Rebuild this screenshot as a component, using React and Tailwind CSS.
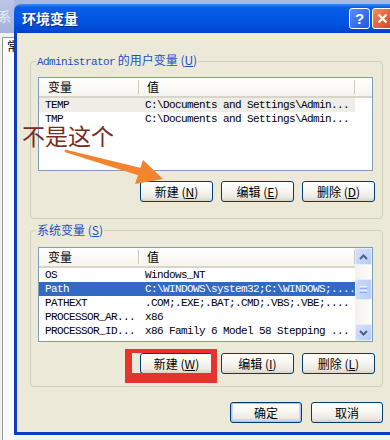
const CJK = "font-['Noto_Sans_CJK_SC','Noto_Sans',sans-serif]";
const MONO = "font-['Liberation_Mono','Noto_Sans_CJK_SC',monospace]";

const userRows = [
  { name: 'TEMP', value: 'C:\\Documents and Settings\\Admin...', soft: true },
  { name: 'TMP', value: 'C:\\Documents and Settings\\Admin...' },
];

const sysRows = [
  { name: 'OS', value: 'Windows_NT' },
  { name: 'Path', value: 'C:\\WINDOWS\\system32;C:\\WINDOWS;....', active: true },
  { name: 'PATHEXT', value: '.COM;.EXE;.BAT;.CMD;.VBS;.VBE;....' },
  { name: 'PROCESSOR_AR...', value: 'x86' },
  { name: 'PROCESSOR_ID...', value: 'x86 Family 6 Model 58 Stepping ...' },
  { name: 'PROCESSOR_LEVEL', value: '6' },
];

const XPButton = ({ text, hotkey, isDefault = false, width = 'w-[73px]' }) => (
  <button
    type="button"
    className={`h-[21px] ${width} rounded-[3px] border border-[#003C74] bg-[linear-gradient(to_bottom,#FFFFFF_0%,#F7F6F1_45%,#ECEAE1_80%,#D8D3C7_100%)] text-[12px] leading-none text-black ${CJK} ${
      isDefault ? 'shadow-[inset_0_0_0_1px_#A9C4F5,inset_0_-1px_0_2px_#C9DAF8]' : ''
    }`}
  >
    {text}
    {hotkey && (
      <span>
        {' ('}
        <span className="underline">{hotkey}</span>
        {')'}
      </span>
    )}
  </button>
);

const Chevron = ({ down = false }) => (
  <svg width="9" height="6" viewBox="0 0 9 6" className={down ? 'rotate-180' : ''}>
    <path d="M1 5 L4.5 1.5 L8 5" fill="none" stroke="#4D6185" strokeWidth="2" />
  </svg>
);

const ScrollBar = () => (
  <div className="flex w-[17px] shrink-0 flex-col bg-[linear-gradient(to_right,#F3F1EC,#FEFEFB)]">
    <div className="flex h-[17px] items-center justify-center rounded-[2px] border border-[#E6EDFD] bg-[linear-gradient(to_bottom_right,#D6E2FC,#B6CBF7)]">
      <Chevron />
    </div>
    <div className="h-[14px]" />
    <div className="flex h-[21px] flex-col items-center justify-center gap-[1px] rounded-[2px] border border-[#E6EDFD] bg-[linear-gradient(to_right,#CADAFC,#B9CEF8)]">
      <div className="h-px w-[7px] bg-[#EEF4FE]" />
      <div className="h-px w-[7px] bg-[#8CB0F8]" />
      <div className="h-px w-[7px] bg-[#EEF4FE]" />
      <div className="h-px w-[7px] bg-[#8CB0F8]" />
    </div>
    <div className="flex-1" />
    <div className="flex h-[17px] items-center justify-center rounded-[2px] border border-[#E6EDFD] bg-[linear-gradient(to_bottom_right,#D6E2FC,#B6CBF7)]">
      <Chevron down />
    </div>
  </div>
);

const ListView = ({ rows, heightClass, scroll = false }) => (
  <div className={`flex ${heightClass} w-[335px] overflow-hidden border border-[#7F9DB9] bg-white`}>
    <div className="min-w-0 flex-1">
      {/* Header */}
      <div className={`flex h-[20px] items-center border-b-[2px] border-[#D8D5C8] bg-[linear-gradient(to_bottom,#FFFFFF,#F5F4EE)] text-[12px] text-black ${CJK}`}>
        <div className="w-[99px] shrink-0 pl-[9px]">变量</div>
        <div className="h-[14px] w-[2px] shrink-0 border-l border-r border-l-[#CBC8BA] border-r-white" />
        <div className="w-[214px] shrink-0 pl-[7px]">值</div>
        <div className="h-[14px] w-[2px] shrink-0 border-l border-r border-l-[#CBC8BA] border-r-white" />
      </div>
      {/* Rows */}
      {rows.map((r) => (
        <div
          key={r.name}
          className={`flex h-[14px] w-[316px] items-center whitespace-nowrap text-[11px] leading-[14px] tracking-[-0.6px] ${MONO} ${
            r.active ? 'bg-[#316AC5] text-white' : r.soft ? 'bg-[#EEEDE6] text-black' : 'text-black'
          }`}
        >
          <div className="w-[100px] shrink-0 overflow-hidden pl-[6px]">{r.name}</div>
          <div className="min-w-0 flex-1 overflow-hidden pl-[6px]">{r.value}</div>
        </div>
      ))}
    </div>
    {scroll && <ScrollBar />}
  </div>
);

const GroupBox = ({ legend, className = '', children }) => (
  <fieldset className={`w-[353px] rounded-[4px] border border-[#D0D0BF] px-[7px] ${className}`}>
    <legend className={`-ml-[2px] px-[1px] text-[12px] leading-[16px] text-[#1D4EC6] ${CJK}`}>{legend}</legend>
    {children}
  </fieldset>
);

const TitleBar = () => (
  <div className="flex h-[29px] items-center justify-between rounded-tl-[7px] bg-[linear-gradient(to_bottom,#3E8DF6_0%,#0B5DE8_12%,#0256E4_55%,#0049D3_90%,#0040C0_100%)] pl-[8px]">
    <span className={`text-[14px] font-bold text-white [text-shadow:1px_1px_#0A2A8F] ${CJK}`}>环境变量</span>
    <div className="mr-[5px] flex gap-[2px]">
      <div className="flex h-[21px] w-[21px] items-center justify-center rounded-[3px] border border-white bg-[linear-gradient(to_bottom_right,#5A8EF6,#1E56DC)] text-[15px] font-bold leading-none text-white font-['Liberation_Sans',sans-serif]">
        ?
      </div>
      <div className="flex h-[21px] w-[21px] items-center justify-center rounded-[3px] border border-white bg-[linear-gradient(to_bottom_right,#F08A65,#D5441D)]">
        <svg width="11" height="11" viewBox="0 0 11 11">
          <path d="M1.5 1.5 L9.5 9.5 M9.5 1.5 L1.5 9.5" stroke="white" strokeWidth="2.2" />
        </svg>
      </div>
    </div>
  </div>
);

const BehindWindow = () => (
  <div className="flex w-[14px] shrink-0 flex-col">
    <div className={`h-[33px] overflow-hidden bg-[linear-gradient(to_bottom,#BAC6E6,#A2B2DA)] pt-[9px] text-[13px] leading-none text-[#E9EDF8] ${CJK}`}>
      <span className="-ml-[2px] block">系</span>
    </div>
    <div className="flex flex-1 flex-col bg-[#F2F1EC] pl-[2px]">
      <div className={`mt-[4px] h-[16px] overflow-hidden border-l border-t border-[#919B9C] bg-white pl-[4px] text-[12px] leading-[16px] text-black ${CJK}`}>
        常
      </div>
      <div className="flex-1 border-l border-[#919B9C] bg-[#FBFBFA]" />
    </div>
  </div>
);

export default function App() {
  return (
    <div className="relative flex h-[440px] w-[390px] overflow-hidden bg-[#F4F3EF]">
      <BehindWindow />

      <div className="flex w-[384px] shrink-0 flex-col bg-[linear-gradient(to_bottom,#A9B8DE_0px,#A9B8DE_33px,transparent_33px)] pt-[4px]">
        <TitleBar />
        <div className="h-[402px] border-b-[3px] border-l-[3px] border-[#0B3FC1] bg-[#ECE9D8] pl-[13px] pt-[19px]">
          <GroupBox
            className="pb-[16px]"
            legend={
              <>
                <span className={MONO + ' text-[11px] tracking-[-0.6px]'}>Administrator</span> 的用户变量 (<span className="underline">U</span>)
              </>
            }
          >
            <div className="mt-[7px]">
              <ListView rows={userRows} heightClass="h-[94px]" />
            </div>
            <div className="mt-[10px] flex justify-end gap-[8px]">
              <XPButton text="新建" hotkey="N" />
              <XPButton text="编辑" hotkey="E" />
              <XPButton text="删除" hotkey="D" />
            </div>
          </GroupBox>

          <GroupBox
            className="mt-[3px] pb-[12px]"
            legend={
              <>
                系统变量 (<span className="underline">S</span>)
              </>
            }
          >
            <div className="mt-[9px]">
              <ListView rows={sysRows} heightClass="h-[95px]" scroll />
            </div>
            <div className="mt-[11px] flex justify-end gap-[8px]">
              <XPButton text="新建" hotkey="W" />
              <XPButton text="编辑" hotkey="I" />
              <XPButton text="删除" hotkey="L" />
            </div>
          </GroupBox>

          <div className="mt-[15px] flex w-[353px] justify-end gap-[9px]">
            <XPButton text="确定" width="w-[72px]" isDefault />
            <XPButton text="取消" width="w-[72px]" />
          </div>
        </div>
      </div>

      {/* annotation overlays */}
      <div className={`pointer-events-none absolute left-[22px] top-[121px] text-[23px] leading-[28px] text-[#7A2B22] ${CJK}`}>
        不是这个
      </div>
      <svg className="pointer-events-none absolute left-0 top-0" width="390" height="440" viewBox="0 0 390 440">
        <polygon points="65,149.5 64.5,152 139,175.5 141,168" fill="#F2842F" />
        <polygon points="143,160 163,179 135,184" fill="#F2842F" />
      </svg>
      <div className="pointer-events-none absolute left-[125px] top-[349px] h-[34px] w-[92px] border-b-[10px] border-l-[7px] border-r-[6px] border-t-[4px] border-[#E8322E]" />
    </div>
  );
}
